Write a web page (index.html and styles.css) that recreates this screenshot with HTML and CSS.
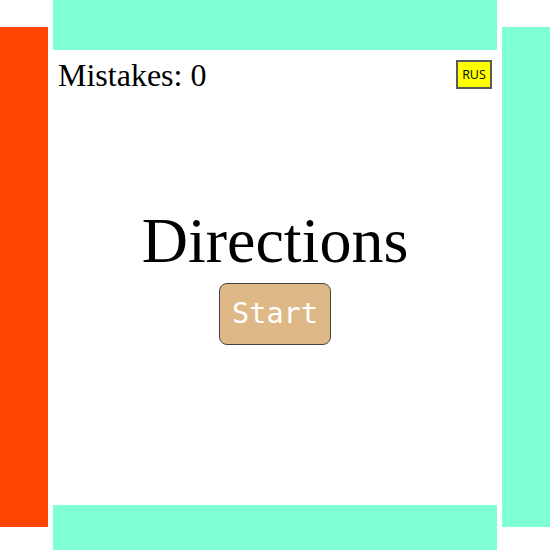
FILE: index.html
```html
<!DOCTYPE html>
<html>
<head>
<meta charset="utf-8">
<link rel="stylesheet" href="styles.css">
</head>
<body>
<div class="frame">
  <div class="side side-left"></div>
  <div class="center">
    <div class="bar bar-top"></div>
    <div class="main">
      <div class="header">
        <div class="mistakes">Mistakes: 0</div>
        <button class="lang">RUS</button>
      </div>
      <div class="title">Directions</div>
      <div class="actions">
        <button class="start">Start</button>
      </div>
    </div>
    <div class="bar bar-bottom"></div>
  </div>
  <div class="side side-right"></div>
</div>
</body>
</html>
```
FILE: styles.css
```css
html, body {
  margin: 0;
  padding: 0;
  background: #ffffff;
}
body {
  width: 550px;
  height: 550px;
  overflow: hidden;
  font-family: "Liberation Serif", "Times New Roman", serif;
}
.frame {
  display: grid;
  grid-template-columns: 48px 444px 48px;
  column-gap: 5px;
  height: 550px;
}
.side {
  margin-top: 27px;
  height: 500px;
}
.side-left { background: #ff4500; }
.side-right { background: #7fffd4; }
.center {
  display: flex;
  flex-direction: column;
  height: 550px;
}
.bar { background: #7fffd4; }
.bar-top { height: 50px; }
.bar-bottom { height: 45px; }
.main {
  flex: 1;
  display: flex;
  flex-direction: column;
}
.header {
  display: flex;
  justify-content: space-between;
  align-items: flex-start;
  padding: 7px 5px 0 5px;
}
.mistakes {
  font-size: 32px;
  line-height: 36px;
  color: #000;
}
.lang {
  margin-top: 3px;
  width: 36px;
  height: 29px;
  padding: 0;
  background: #ffff00;
  border: 2px solid #5a5a5a;
  font-family: "Open Sans", "Noto Sans", sans-serif;
  font-size: 12.5px;
  color: #000;
}
.title {
  margin-top: 111px;
  text-align: center;
  font-size: 64px;
  line-height: 74px;
  color: #000;
}
.actions {
  display: flex;
  justify-content: center;
  margin-top: 5px;
}
.start {
  width: 112px;
  height: 62px;
  background: #deb887;
  color: #ffffff;
  border: 1px solid #444444;
  border-radius: 8px;
  font-family: "DejaVu Sans Mono", "Liberation Mono", monospace;
  font-size: 28.5px;
  line-height: 32px;
  padding: 0;
  margin: 0;
}
```
